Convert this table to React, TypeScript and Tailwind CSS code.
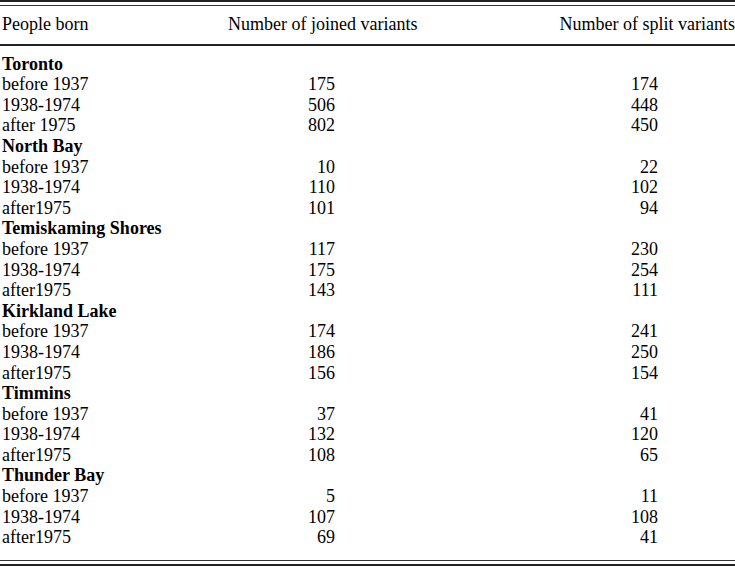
type Row = { label: string; joined: number; split: number };
type Group = { city: string; rows: Row[] };

const groups: Group[] = [
  {
    city: "Toronto",
    rows: [
      { label: "before 1937", joined: 175, split: 174 },
      { label: "1938-1974", joined: 506, split: 448 },
      { label: "after 1975", joined: 802, split: 450 },
    ],
  },
  {
    city: "North Bay",
    rows: [
      { label: "before 1937", joined: 10, split: 22 },
      { label: "1938-1974", joined: 110, split: 102 },
      { label: "after1975", joined: 101, split: 94 },
    ],
  },
  {
    city: "Temiskaming Shores",
    rows: [
      { label: "before 1937", joined: 117, split: 230 },
      { label: "1938-1974", joined: 175, split: 254 },
      { label: "after1975", joined: 143, split: 111 },
    ],
  },
  {
    city: "Kirkland Lake",
    rows: [
      { label: "before 1937", joined: 174, split: 241 },
      { label: "1938-1974", joined: 186, split: 250 },
      { label: "after1975", joined: 156, split: 154 },
    ],
  },
  {
    city: "Timmins",
    rows: [
      { label: "before 1937", joined: 37, split: 41 },
      { label: "1938-1974", joined: 132, split: 120 },
      { label: "after1975", joined: 108, split: 65 },
    ],
  },
  {
    city: "Thunder Bay",
    rows: [
      { label: "before 1937", joined: 5, split: 11 },
      { label: "1938-1974", joined: 107, split: 108 },
      { label: "after1975", joined: 69, split: 41 },
    ],
  },
];

export default function App() {
  return (
    <div className="w-[735px] h-[567px] bg-white text-black font-['Liberation_Serif','Times_New_Roman',serif] text-[18px] leading-[20.6px] overflow-hidden">
      {/* top double rule */}
      <div className="h-[2px] bg-[#222]" />
      <div className="h-[1px] mt-[3px] bg-[#333]" />

      {/* header */}
      <div className="flex mt-[8px]">
        <div className="w-[228px] pl-[2px]">People born</div>
        <div>Number of joined variants</div>
        <div className="ml-auto">Number of split variants</div>
      </div>
      <div className="h-[2px] mt-[9px] bg-[#222]" />

      {/* body */}
      <div className="mt-[8px]">
        {groups.map((g) => (
          <div key={g.city}>
            <div className="pl-[2px] font-bold">{g.city}</div>
            {g.rows.map((r) => (
              <div key={r.label} className="flex">
                <div className="w-[228px] pl-[2px]">{r.label}</div>
                <div className="w-[107px] text-right">{r.joined}</div>
                <div className="w-[323px] text-right">{r.split}</div>
              </div>
            ))}
          </div>
        ))}
      </div>

      {/* bottom double rule */}
      <div className="h-[1px] mt-[12px] bg-[#333]" />
      <div className="h-[2px] mt-[3px] bg-[#222]" />
    </div>
  );
}
